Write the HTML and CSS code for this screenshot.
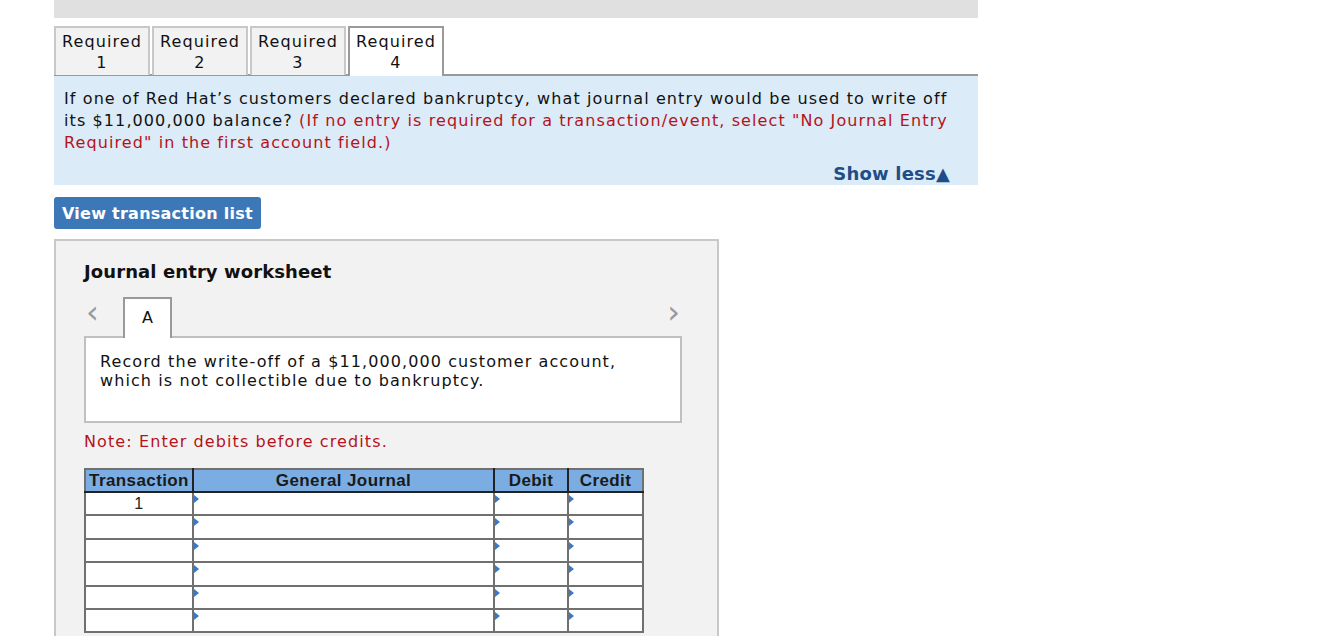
FILE: index.html
```html
<!DOCTYPE html>
<html lang="en">
<head>
    <meta charset="UTF-8">
    <title>Journal Entry</title>
    <link rel="stylesheet" href="styles.css">
</head>
<body>
    <div class="page">
        <div class="top-bar"></div>

        <div class="req-tabs">
            <div class="req-tab">Required<br>1</div>
            <div class="req-tab">Required<br>2</div>
            <div class="req-tab">Required<br>3</div>
            <div class="req-tab active">Required<br>4</div>
        </div>

        <div class="question">
            <p>If one of Red Hat’s customers declared bankruptcy, what journal entry would be used to write off its $11,000,000 balance? <span class="red">(If no entry is required for a transaction/event, select "No Journal Entry Required" in the first account field.)</span></p>
            <div class="show-less">Show less&#9650;</div>
        </div>

        <button type="button" class="view-btn">View transaction list</button>

        <div class="worksheet">
            <h3>Journal entry worksheet</h3>

            <div class="ws-nav">
                <span class="arrow">&lsaquo;</span>
                <div class="ws-tab">A</div>
                <span class="arrow right">&rsaquo;</span>
            </div>

            <div class="desc">Record the write-off of a $11,000,000 customer account, which is not collectible due to bankruptcy.</div>

            <p class="note">Note: Enter debits before credits.</p>

            <table class="journal">
                <thead>
                    <tr>
                        <th class="c-tr">Transaction</th>
                        <th class="c-gj">General Journal</th>
                        <th class="c-db">Debit</th>
                        <th class="c-cr">Credit</th>
                    </tr>
                </thead>
                <tbody>
                    <tr><td class="num">1</td><td class="mark"></td><td class="mark"></td><td class="mark"></td></tr>
                    <tr><td></td><td class="mark"></td><td class="mark"></td><td class="mark"></td></tr>
                    <tr><td></td><td class="mark"></td><td class="mark"></td><td class="mark"></td></tr>
                    <tr><td></td><td class="mark"></td><td class="mark"></td><td class="mark"></td></tr>
                    <tr><td></td><td class="mark"></td><td class="mark"></td><td class="mark"></td></tr>
                    <tr><td></td><td class="mark"></td><td class="mark"></td><td class="mark"></td></tr>
                </tbody>
            </table>
        </div>
    </div>
</body>
</html>
```

FILE: styles.css
```css
body {
    margin: 0;
    font-family: 'DejaVu Sans', Verdana, sans-serif;
    font-size: 16px;
    letter-spacing: 1.1px;
    color: #111;
    background: #fff;
}

.page {
    width: 924px;
    margin-left: 54px;
}

.top-bar {
    height: 18px;
    background-color: #e0e0e0;
}

.req-tabs {
    display: flex;
    gap: 2px;
    margin-top: 8px;
    border-bottom: 2px solid #9a9a9a;
}

.req-tab {
    width: 92px;
    height: 44px;
    border: 2px solid #c8c8c8;
    border-bottom: none;
    background-color: #f2f2f2;
    text-align: center;
    line-height: 21px;
    padding-top: 3px;
    margin-bottom: -1px;
}

.req-tab.active {
    background-color: #fff;
    border-color: #9a9a9a;
    position: relative;
    margin-bottom: -2px;
    height: 45px;
}

.question {
    background-color: #dbebf7;
    padding: 12px 20px 0 10px;
    height: 97px;
}

.question p {
    margin: 0;
    line-height: 22px;
}

.red {
    color: #b5121b;
}

.show-less {
    text-align: right;
    margin: 9px 8px 0 0;
    font-weight: bold;
    color: #1f4d87;
    font-size: 18px;
    letter-spacing: 0.2px;
}

.view-btn {
    display: block;
    margin-top: 12px;
    background-color: #3c77b8;
    color: #fff;
    border: none;
    border-radius: 3px;
    font-family: 'DejaVu Sans', Verdana, sans-serif;
    font-weight: bold;
    font-size: 16px;
    letter-spacing: 0.25px;
    height: 32px;
    padding: 0 8px;
}

.worksheet {
    margin-top: 10px;
    width: 633px;
    height: 400px;
    background-color: #f2f2f2;
    border: 2px solid #c8c8c8;
    padding: 0 0 0 28px;
}

.worksheet h3 {
    margin: 20px 0 0;
    font-size: 18px;
    letter-spacing: 0.1px;
    line-height: 22px;
}

.ws-nav {
    display: flex;
    align-items: flex-end;
    margin-top: 14px;
    width: 598px;
}

.arrow {
    color: #999;
    font-size: 32px;
    line-height: 30px;
    width: 37px;
    padding-left: 2px;
    align-self: flex-start;
    letter-spacing: 0;
}

.arrow.right {
    margin-left: auto;
    width: auto;
    padding-right: 2px;
}

.ws-tab {
    width: 45px;
    height: 39px;
    background-color: #fff;
    border: 2px solid #999;
    border-bottom: none;
    text-align: center;
    line-height: 38px;
    letter-spacing: 0;
    margin-bottom: -2px;
    position: relative;
}

.desc {
    width: 566px;
    height: 69px;
    background-color: #fff;
    border: 2px solid #c0c0c0;
    padding: 14px 14px 0;
    line-height: 19px;
}

.note {
    color: #b5121b;
    margin: 8px 0 0;
    line-height: 22px;
}

.journal {
    margin-top: 15px;
    border-collapse: collapse;
    border: 2px solid #707070;
    font-family: 'Liberation Sans', Arial, sans-serif;
    font-size: 17px;
    letter-spacing: 0.4px;
}

.journal th {
    background-color: #7badE2;
    border: 2px solid #222;
    border-top-color: #707070;
    height: 21px;
    padding: 0 2px;
    font-weight: bold;
    color: #1a1a1a;
}

.journal th:first-child {
    border-left-color: #707070;
}

.journal th:last-child {
    border-right-color: #707070;
}

.c-tr { width: 102px; }
.c-gj { width: 295px; }
.c-db { width: 68px; }
.c-cr { width: 69px; }

.journal td {
    height: 21.4px;
    border: 2px solid #707070;
    background-color: #fff;
    padding: 0;
    vertical-align: top;
    position: relative;
}

.journal td.num {
    text-align: center;
    line-height: 21px;
    font-size: 16px;
    color: #222;
}

.journal td.mark::before {
    content: "";
    position: absolute;
    left: 0;
    top: 2px;
    border-left: 5px solid #3a78c8;
    border-top: 4px solid transparent;
    border-bottom: 4px solid transparent;
}
```
